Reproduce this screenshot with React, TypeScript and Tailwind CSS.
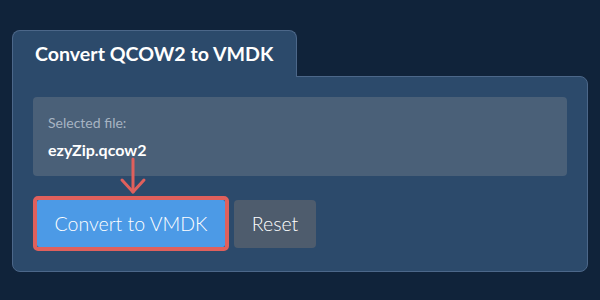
import * as React from 'react';

function DownArrow() {
  return (
    <svg
      className="absolute left-[86px] top-[-39px]"
      width="28"
      height="38"
      viewBox="0 0 28 38"
      fill="none"
      stroke="#e0605c"
      strokeWidth="3"
      strokeLinecap="round"
      strokeLinejoin="round"
    >
      <path d="M14 2v33" />
      <path d="M3 23l11 12 11-12" />
    </svg>
  );
}

export default function App() {
  return (
    <div
      className="h-[300px] w-[600px] bg-[#10233a] px-[12px] pt-[30px]"
      style={{ fontFamily: 'Lato, "Open Sans", sans-serif' }}
    >
      <div className="relative z-10 -mb-px w-[285px] rounded-t-lg border border-b-0 border-[#4c6789] bg-[#2c4a6b] px-[22px] pb-[12px] pt-[12px]">
        <h1 className="text-[19.6px] font-bold leading-[22px] text-white">Convert QCOW2 to VMDK</h1>
      </div>
      <div className="w-[576px] rounded-b-lg rounded-tr-lg border border-[#4c6789] bg-[#2c4a6b] p-[20px]">
        <div className="h-[79px] rounded-[4px] bg-[#4a6078] px-[15px] pt-[18px]">
          <p className="text-[14px] leading-[16px] text-[#a7b4c3]">Selected file:</p>
          <p className="mt-[10px] text-[16px] font-bold leading-[18px] text-white">ezyZip.qcow2</p>
        </div>
        <div className="relative mt-[20px] flex items-center gap-[5px]">
          <DownArrow />
          <div className="rounded-[5px] border-4 border-[#e0605c]">
            <button className="h-[47px] w-[188px] rounded-[2px] bg-[#4c9ae6] text-[19.5px] font-light text-white">
              Convert to VMDK
            </button>
          </div>
          <button className="h-[48px] w-[82px] rounded-[4px] bg-[#4e5c6d] text-[19.5px] font-light text-white">
            Reset
          </button>
        </div>
      </div>
    </div>
  );
}
